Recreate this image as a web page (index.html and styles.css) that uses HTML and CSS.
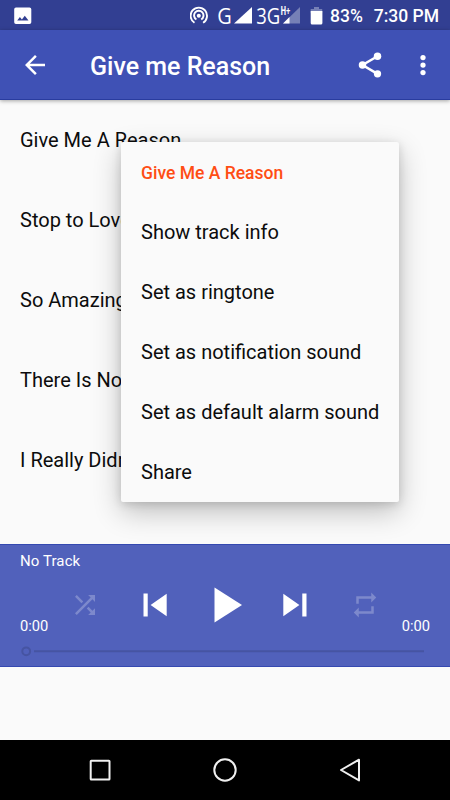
FILE: index.html
```html
<!DOCTYPE html>
<html lang="en">
<head>
<meta charset="utf-8">
<title>Give me Reason</title>
<link rel="stylesheet" href="styles.css">
</head>
<body>
<div class="screen">
  <div class="status">
    <svg class="status-photo" width="18" height="18" viewBox="0 0 18 18"><path fill="#fff" fill-rule="evenodd" d="M2 .5h13.500a1.800 1.800 0 0 1 1.800 1.800v12.900a1.800 1.800 0 0 1-1.800 1.800H2A1.800 1.800 0 0 1 .2 15.200V2.300A1.800 1.800 0 0 1 2 .5zM3.200 13.500h11.300L10.800 8.800l-2.900 3.600-2-2.400z"/></svg>
    <svg class="status-radio" width="112" height="30" viewBox="190 0 112 30">
      <g fill="none" stroke="#fff" stroke-width="1.900">
        <path d="M194.500 22.800a8.200 8.200 0 1 1 8.600 0M196.400 19.500a4.700 4.700 0 1 1 4.800 0"/>
      </g>
      <circle cx="198.800" cy="15.700" r="2" fill="#fff"/>
      <text class="net" x="217.200" y="23.500" textLength="14.500" lengthAdjust="spacingAndGlyphs">G</text>
      <path fill="#fff" d="M234 23.500 252 7v16.500z"/>
      <text class="net" x="256.200" y="23.500" textLength="24" lengthAdjust="spacingAndGlyphs">3G</text>
      <path fill="#7680b6" d="M283 23.500 300 7v16.500z"/>
      <path fill="#fff" d="M283 23.500 289.500 17v6.500z"/>
      <path fill="#323f92" d="M281 5h10v10.500h-10z"/>
      <text class="net-type" x="280.400" y="14.500" textLength="10" lengthAdjust="spacingAndGlyphs">H+</text>
    </svg>
    <svg class="battery" width="14" height="20" viewBox="0 0 14 20"><path fill="#7680b6" d="M4 1h5v2h3.200v4H.7V3H4z"/><path fill="#fff" d="M.7 5h11.700v12a1.500 1.500 0 0 1-1.500 1.500H2.200A1.500 1.500 0 0 1 .7 17z"/></svg>
    <span class="percent">83%</span>
    <span class="clock">7:30 PM</span>
  </div>

  <header class="toolbar">
    <svg class="back" width="30" height="30" viewBox="0 0 24 24"><path fill="#fff" d="M20 11H7.830l5.590-5.590L12 4l-8 8 8 8 1.410-1.410L7.830 13H20v-2z"/></svg>
    <h1 class="title">Give me Reason</h1>
    <svg class="share" width="30" height="30" viewBox="0 0 24 24"><path fill="none" stroke="#fff" stroke-width="2" d="M18 5 6 12l12 7.100"/><g fill="#fff"><circle cx="18" cy="5" r="3"/><circle cx="6" cy="12" r="3"/><circle cx="18" cy="19.080" r="2.920"/></g></svg>
    <svg class="more" width="30" height="30" viewBox="0 0 24 24"><g fill="#fff"><circle cx="12" cy="6" r="2.100"/><circle cx="12" cy="12" r="2.100"/><circle cx="12" cy="18" r="2.100"/></g></svg>
  </header>

  <main class="tracks">
    <div class="track">Give Me A Reason</div>
    <div class="track">Stop to Love</div>
    <div class="track">So Amazing</div>
    <div class="track">There Is Nothing</div>
    <div class="track">I Really Didn't</div>
    <div class="menu">
      <div class="menu-header">Give Me A Reason</div>
      <div class="menu-item">Show track info</div>
      <div class="menu-item">Set as ringtone</div>
      <div class="menu-item">Set as notification sound</div>
      <div class="menu-item">Set as default alarm sound</div>
      <div class="menu-item">Share</div>
    </div>
  </main>

  <section class="player">
    <div class="now">No Track</div>
    <div class="controls">
      <span class="time">0:00</span>
      <svg class="dim" width="30" height="30" viewBox="0 0 24 24"><path fill="#fff" d="M10.590 9.170 5.410 4 4 5.410l5.170 5.170 1.420-1.410zM14.500 4l2.040 2.040L4 18.590 5.410 20 17.960 7.460 20 9.500V4h-5.500zm.33 9.410-1.410 1.410 3.130 3.130L14.500 20H20v-5.500l-2.040 2.040-3.130-3.130z"/></svg>
      <svg width="46" height="46" viewBox="0 0 24 24"><path fill="#fff" d="M6 6h2.200v12H6zm3.700 6 8.400 5.900V6.100z"/></svg>
      <svg width="60" height="60" viewBox="0 0 24 24"><path fill="#fff" d="M7.800 5v14l11-7z"/></svg>
      <svg width="46" height="46" viewBox="0 0 24 24"><path fill="#fff" d="M5.900 17.900 14.300 12 5.900 6.100zM15.800 6v12H18V6z"/></svg>
      <svg class="dim" width="30" height="30" viewBox="0 0 24 24"><path fill="#fff" d="M7 7h10v3l4-4-4-4v3H5v6h2V7zm10 10H7v-3l-4 4 4 4v-3h12v-6h-2v4z"/></svg>
      <span class="time time-end">0:00</span>
    </div>
    <svg class="seek" width="410" height="14" viewBox="0 0 410 14"><path stroke="#4654a2" stroke-width="2" d="M14 7.300h390"/><circle cx="6.200" cy="7.300" r="3.900" fill="none" stroke="#4654a2" stroke-width="2"/></svg>
  </section>

  <nav class="nav">
    <svg width="30" height="30" viewBox="0 0 30 30"><rect x="5.700" y="5.700" width="18.800" height="18.800" rx=".6"/></svg>
    <svg width="30" height="30" viewBox="0 0 30 30"><circle cx="15" cy="15" r="10.700"/></svg>
    <svg width="30" height="30" viewBox="0 0 30 30"><path d="M24 4.700v20.700L6 15z"/></svg>
  </nav>
</div>
</body>
</html>
```

FILE: styles.css
```css
* { box-sizing: border-box; }
body {
  margin: 0;
  font-family: Roboto, "Liberation Sans", sans-serif;
  color: #0c0c0c;
}
svg { display: block; flex: none; }
.screen {
  width: 450px;
  height: 800px;
  display: flex;
  flex-direction: column;
  background: #fafafa;
  overflow: hidden;
}
.status {
  height: 30px;
  flex: none;
  display: flex;
  align-items: center;
  background: #323f92;
  color: #fff;
  font-size: 17.500px;
  font-weight: 500;
  line-height: 30px;
  padding: 1px 11px 0 14px;
  white-space: nowrap;
}
.status-radio { margin: -1px 0 0 158px; }
.net { font: 22.500px "Open Sans", sans-serif; fill: #fff; }
.net-type { font: bold 11.500px "Open Sans", sans-serif; fill: #fff; }
.battery { margin-left: 8px; }
.percent { margin-left: 6px; }
.clock { margin-left: auto; }
.toolbar {
  position: relative;
  z-index: 1;
  height: 70px;
  flex: none;
  display: flex;
  align-items: center;
  padding: 0 12px 0 20px;
  background: #3f51b5;
  border-bottom: 1px solid #293c9f;
  box-shadow: 0 1px 4px rgba(0, 0, 0, .35);
}
.title {
  margin: 4px auto 0 40px;
  color: #fff;
  font-size: 25px;
  font-weight: 500;
}
.more { margin-left: 23px; }
.tracks {
  position: relative;
  height: 444px;
  flex: none;
}
.track {
  height: 80px;
  line-height: 81px;
  padding-left: 20px;
  font-size: 20px;
}
.menu {
  position: absolute;
  left: 121px;
  top: 42px;
  width: 278px;
  height: 360px;
  padding-left: 20px;
  border-radius: 2px;
  background: #fafafa;
  box-shadow: 0 10px 28px rgba(0, 0, 0, .24), 0 2px 10px rgba(0, 0, 0, .14);
}
.menu-header, .menu-item {
  height: 60px;
  line-height: 61px;
  font-size: 20px;
  white-space: nowrap;
}
.menu-header {
  line-height: 62px;
  color: #ff4d14;
  font-size: 17.500px;
  font-weight: 500;
}
.player {
  position: relative;
  height: 123px;
  flex: none;
  padding: 5px 20px 0;
  background: #5161bb;
  border-top: 1px solid #3549b0;
  border-bottom: 1px solid #3549b0;
  color: #fff;
}
.now { height: 25px; line-height: 22px; font-size: 15px; letter-spacing: .1px; }
.controls {
  height: 60px;
  display: grid;
  grid-template-columns: 30px repeat(5, 70px) 30px;
  align-items: center;
  justify-items: center;
}
.time {
  font-size: 14.700px;
  justify-self: start;
  padding-top: 41px;
}
.time-end { justify-self: end; }
.dim { opacity: .25; }
.seek { margin-top: 9px; }
.nav {
  height: 60px;
  margin-top: auto;
  flex: none;
  display: flex;
  justify-content: center;
  align-items: center;
  gap: 95px;
  background: #000;
}
.nav svg { fill: none; stroke: #f0f0f0; stroke-width: 2; stroke-linejoin: round; }
```
